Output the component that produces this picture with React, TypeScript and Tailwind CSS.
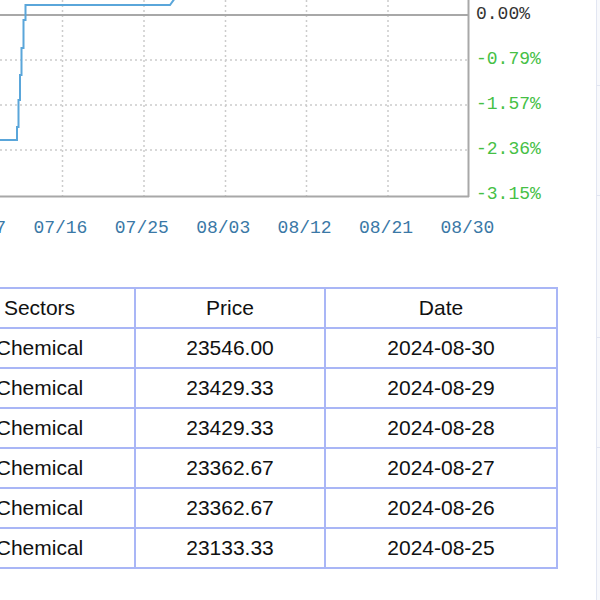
import React from "react";

const rows = [
  ["Chemical", "23546.00", "2024-08-30"],
  ["Chemical", "23429.33", "2024-08-29"],
  ["Chemical", "23429.33", "2024-08-28"],
  ["Chemical", "23362.67", "2024-08-27"],
  ["Chemical", "23362.67", "2024-08-26"],
  ["Chemical", "23133.33", "2024-08-25"],
];

const vx = [-19, 62.5, 144, 225.5, 306.5, 388];
const xl = ["07/07", "07/16", "07/25", "08/03", "08/12", "08/21", "08/30"];
const ylab = [
  { y: 15, t: "0.00%", c: "#333333" },
  { y: 60, t: "-0.79%", c: "#45c045" },
  { y: 105, t: "-1.57%", c: "#45c045" },
  { y: 150, t: "-2.36%", c: "#45c045" },
  { y: 195, t: "-3.15%", c: "#45c045" },
];

function Chart() {
  return (
    <svg width="596" height="250" className="block" style={{ fontFamily: '"Liberation Mono", monospace' }}>
      {vx.map((x) => (
        <line key={x} x1={x} y1={0} x2={x} y2={196} stroke="#cccccc" strokeWidth={1.5} strokeDasharray="2 3" />
      ))}
      {[60, 105, 150].map((y) => (
        <line key={y} x1={0} y1={y} x2={468} y2={y} stroke="#cccccc" strokeWidth={1.5} strokeDasharray="2 3" />
      ))}
      <line x1={0} y1={15} x2={468} y2={15} stroke="#a8a8a8" strokeWidth={2} />
      <line x1={0} y1={196.5} x2={469} y2={196.5} stroke="#a8a8a8" strokeWidth={2} />
      <line x1={468.5} y1={0} x2={468.5} y2={197} stroke="#a8a8a8" strokeWidth={2} />
      <path
        d="M-5 140 H17 V127 H18.5 V100 H20 V75 H21.5 V48 H23.5 V20 H25.5 V5 H170 L178 -6"
        fill="none"
        stroke="#5aa6da"
        strokeWidth={2}
      />
      {ylab.map((l) => (
        <text key={l.t} x={476} y={l.y + 3.5} fill={l.c} fontSize={18}>
          {l.t}
        </text>
      ))}
      {xl.map((t, i) => (
        <text key={t} x={-21 + i * 81.4} y={233} fill="#3a78a6" fontSize={18} textAnchor="middle">
          {t}
        </text>
      ))}
    </svg>
  );
}

export default function App() {
  return (
    <div className="flex w-[600px] h-[600px] overflow-hidden bg-white">
      <div className="w-[596px] shrink-0 overflow-hidden">
        <Chart />
        <table
          className="mt-[37px] ml-[-57px] border-collapse table-fixed text-[21px] text-[#111111]"
          style={{ fontFamily: '"Liberation Sans", Arial, sans-serif', width: 615 }}
        >
          <colgroup>
            <col className="w-[191px]" />
            <col className="w-[190px]" />
            <col className="w-[232px]" />
          </colgroup>
          <thead>
            <tr className="h-[40px]">
              <th className="border-2 border-[#a9b6f6] font-normal text-center p-0">Sectors</th>
              <th className="border-2 border-[#a9b6f6] font-normal text-center p-0">Price</th>
              <th className="border-2 border-[#a9b6f6] font-normal text-center p-0">Date</th>
            </tr>
          </thead>
          <tbody>
            {rows.map((r, i) => (
              <tr key={i} className="h-[40px]">
                {r.map((c, j) => (
                  <td key={j} className="border-2 border-[#a9b6f6] text-center p-0">
                    {c}
                  </td>
                ))}
              </tr>
            ))}
          </tbody>
        </table>
      </div>
      <div className="flex-1 flex flex-col border-l border-[#e2e6f2] bg-[#f8f9fc]">
        <div className="h-[85px]" />
        <div className="h-[110px] border-t border-[#e2e6f2]" />
        <div className="h-[142px] border-t border-[#e2e6f2]" />
        <div className="h-[110px] border-t border-[#e2e6f2]" />
        <div className="flex-1 border-t border-[#e2e6f2]" />
      </div>
    </div>
  );
}
